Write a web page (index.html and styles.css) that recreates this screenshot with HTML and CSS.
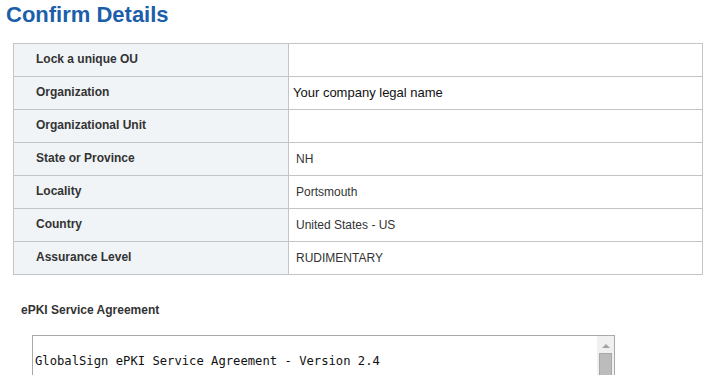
FILE: index.html
```html
<!DOCTYPE html>
<html>
<head>
<meta charset="utf-8">
<link rel="stylesheet" href="styles.css">
</head>
<body>
<h1 class="title">Confirm Details</h1>
<div class="details">
  <div class="label">Lock a unique OU</div><div class="value"></div>
  <div class="label">Organization</div><div class="value value-strong">Your company legal name</div>
  <div class="label">Organizational Unit</div><div class="value"></div>
  <div class="label">State or Province</div><div class="value">NH</div>
  <div class="label">Locality</div><div class="value">Portsmouth</div>
  <div class="label">Country</div><div class="value">United States - US</div>
  <div class="label">Assurance Level</div><div class="value">RUDIMENTARY</div>
</div>
<div class="agreement-label">ePKI Service Agreement</div>
<div class="agreement">
  <div class="agreement-text">GlobalSign ePKI Service Agreement - Version 2.4</div>
  <div class="scrollbar">
    <div class="arrow"></div>
    <div class="thumb"></div>
  </div>
</div>
</body>
</html>
```

FILE: styles.css
```css
html, body {
  margin: 0;
  padding: 0;
  background: #fff;
}
html {
  overflow: hidden;
}
body {
  padding: 0 6px;
  font-family: "Liberation Sans", Arial, sans-serif;
  color: #333;
  height: 375px;
  overflow: hidden;
}
.title {
  margin: 0;
  padding-top: 1px;
  font-size: 22px;
  line-height: 27px;
  font-weight: bold;
  color: #1b5fab;
}
.details {
  margin: 15px 0 0 7px;
  display: grid;
  grid-template-columns: 275px 414px;
  grid-auto-rows: 33px;
  border-top: 1px solid #c4c4c4;
  border-left: 1px solid #c4c4c4;
  width: 689px;
}
.label, .value {
  box-sizing: border-box;
  border-right: 1px solid #c4c4c4;
  border-bottom: 1px solid #c4c4c4;
  font-size: 12px;
  line-height: 14px;
  padding-top: 8px;
}
.label {
  background: #f0f4f7;
  font-weight: bold;
  padding-left: 22px;
  color: #333;
}
.value {
  padding-left: 7px;
  padding-top: 9px;
  color: #333;
}
.value-strong {
  font-size: 13px;
  line-height: 15px;
  padding-left: 4px;
  padding-top: 8px;
  color: #111;
}
.agreement-label {
  margin: 28px 0 0 15px;
  font-size: 12px;
  line-height: 14px;
  font-weight: bold;
  color: #333;
}
.agreement {
  margin: 18px 0 0 26px;
  width: 583px;
  height: 41px;
  box-sizing: border-box;
  border: 1px solid #a9a9a9;
  display: flex;
}
.agreement-text {
  flex: 1;
  padding: 18px 0 0 2px;
  font-family: "DejaVu Sans Mono", "Liberation Mono", monospace;
  font-size: 12.2px;
  line-height: 14px;
  color: #111;
  white-space: pre;
}
.scrollbar {
  width: 17px;
  background: #f0f0f0;
  display: flex;
  flex-direction: column;
  align-items: center;
}
.arrow {
  margin-top: 8px;
  width: 0;
  height: 0;
  border-left: 4px solid transparent;
  border-right: 4px solid transparent;
  border-bottom: 4px solid #a3a3a3;
}
.thumb {
  margin-top: 5px;
  width: 11px;
  flex: 1;
  background: #bcbcbc;
  border: 1px solid #a8a8a8;
  border-bottom: none;
}
```
